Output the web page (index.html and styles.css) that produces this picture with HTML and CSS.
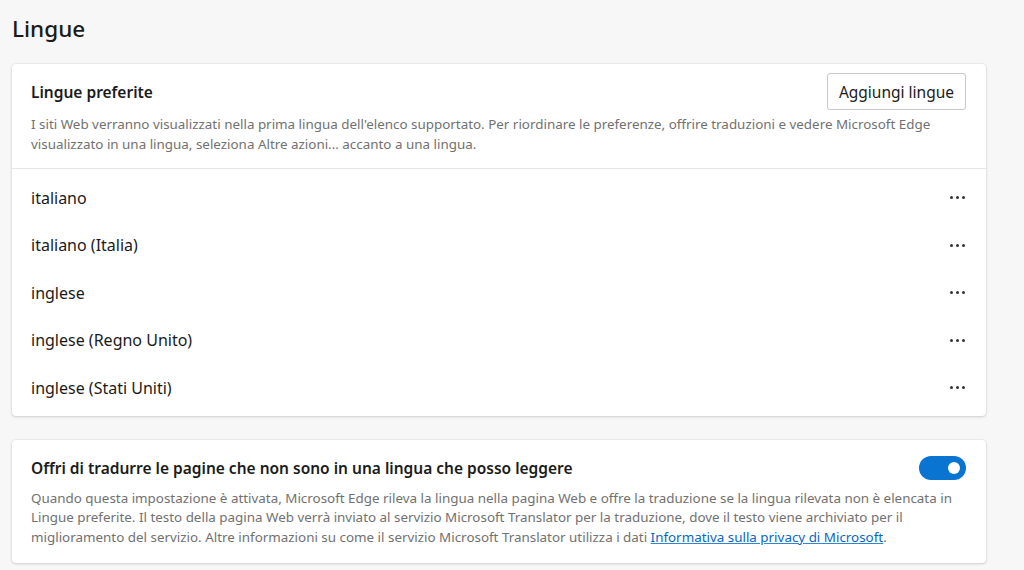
FILE: index.html
```html
<!DOCTYPE html>
<html lang="it">
<head>
<meta charset="utf-8">
<title>Lingue</title>
<link rel="stylesheet" href="styles.css">
</head>
<body>
<main class="page">
  <h1 class="page-title">Lingue</h1>

  <section class="card">
    <div class="card-head">
      <div class="head-row">
        <h2 class="card-title">Lingue preferite</h2>
        <button class="btn">Aggiungi lingue</button>
      </div>
      <p class="desc">I siti Web verranno visualizzati nella prima lingua dell'elenco supportato. Per riordinare le preferenze, offrire traduzioni e vedere Microsoft Edge visualizzato in una lingua, seleziona Altre azioni... accanto a una lingua.</p>
    </div>
    <ul class="lang-list">
      <li class="lang-row"><span>italiano</span><span class="more"><i></i><i></i><i></i></span></li>
      <li class="lang-row"><span>italiano (Italia)</span><span class="more"><i></i><i></i><i></i></span></li>
      <li class="lang-row"><span>inglese</span><span class="more"><i></i><i></i><i></i></span></li>
      <li class="lang-row"><span>inglese (Regno Unito)</span><span class="more"><i></i><i></i><i></i></span></li>
      <li class="lang-row"><span>inglese (Stati Uniti)</span><span class="more"><i></i><i></i><i></i></span></li>
    </ul>
  </section>

  <section class="card card-translate">
    <div class="head-row">
      <h2 class="card-title">Offri di tradurre le pagine che non sono in una lingua che posso leggere</h2>
      <span class="toggle"><span class="knob"></span></span>
    </div>
    <p class="desc">Quando questa impostazione è attivata, Microsoft Edge rileva la lingua nella pagina Web e offre la traduzione se la lingua rilevata non è elencata in Lingue preferite. Il testo della pagina Web verrà inviato al servizio Microsoft Translator per la traduzione, dove il testo viene archiviato per il miglioramento del servizio. Altre informazioni su come il servizio Microsoft Translator utilizza i dati <a href="#" class="link">Informativa sulla privacy di Microsoft</a>.</p>
  </section>
</main>
</body>
</html>
```

FILE: styles.css
```css
* { box-sizing: border-box; }
html, body {
  margin: 0;
  padding: 0;
  background: #f7f7f7;
  font-family: "Noto Sans", "Open Sans", sans-serif;
  color: #1b1b1b;
}
.page {
  width: 974px;
  margin-left: 12px;
  padding-top: 14px;
}
.page-title {
  margin: 0 0 20px 0;
  font-size: 22.5px;
  font-weight: 500;
  line-height: 30px;
  color: #1b1b1b;
}
.card {
  background: #fff;
  border-radius: 4px;
  box-shadow: 0 0 2px rgba(0,0,0,0.12), 0 1px 3px rgba(0,0,0,0.14);
  margin-bottom: 24px;
}
.card-head {
  padding: 9px 20px 14px 19px;
  border-bottom: 1px solid #e6e6e6;
}
.head-row {
  display: flex;
  align-items: center;
  justify-content: space-between;
}
.card-title {
  margin: 0;
  font-size: 15.5px;
  font-weight: 600;
  line-height: 22px;
}
.btn {
  height: 37px;
  padding: 0 11px;
  background: #fff;
  border: 1px solid #c8c8c8;
  border-radius: 3px;
  font-family: inherit;
  font-size: 15.5px;
  color: #1b1b1b;
}
.desc {
  margin: 0;
  font-size: 13.4px;
  line-height: 19.5px;
  color: #717171;
}
.card-head .desc { margin-top: 5px; }
.lang-list {
  list-style: none;
  margin: 0;
  padding: 5px 0 4px 0;
}
.lang-row {
  display: flex;
  align-items: center;
  justify-content: space-between;
  height: 47.5px;
  padding: 0 20px 0 19px;
  font-size: 16px;
}
.more {
  display: flex;
  gap: 3px;
  padding-right: 1px;
}
.more i {
  width: 3px;
  height: 3px;
  border-radius: 50%;
  background: #333;
}
.card-translate {
  padding: 16px 20px 16px 19px;
}
.card-translate .head-row { margin-bottom: 9px; }
.toggle {
  width: 47px;
  height: 24px;
  border-radius: 12px;
  background: #0a74d1;
  display: flex;
  align-items: center;
  justify-content: flex-end;
  padding-right: 6px;
}
.knob {
  width: 12px;
  height: 12px;
  border-radius: 50%;
  background: #fff;
}
.link {
  color: #0a66c2;
  text-decoration: underline;
  text-decoration-color: #2b88d8;
  text-underline-offset: 1px;
}
```
